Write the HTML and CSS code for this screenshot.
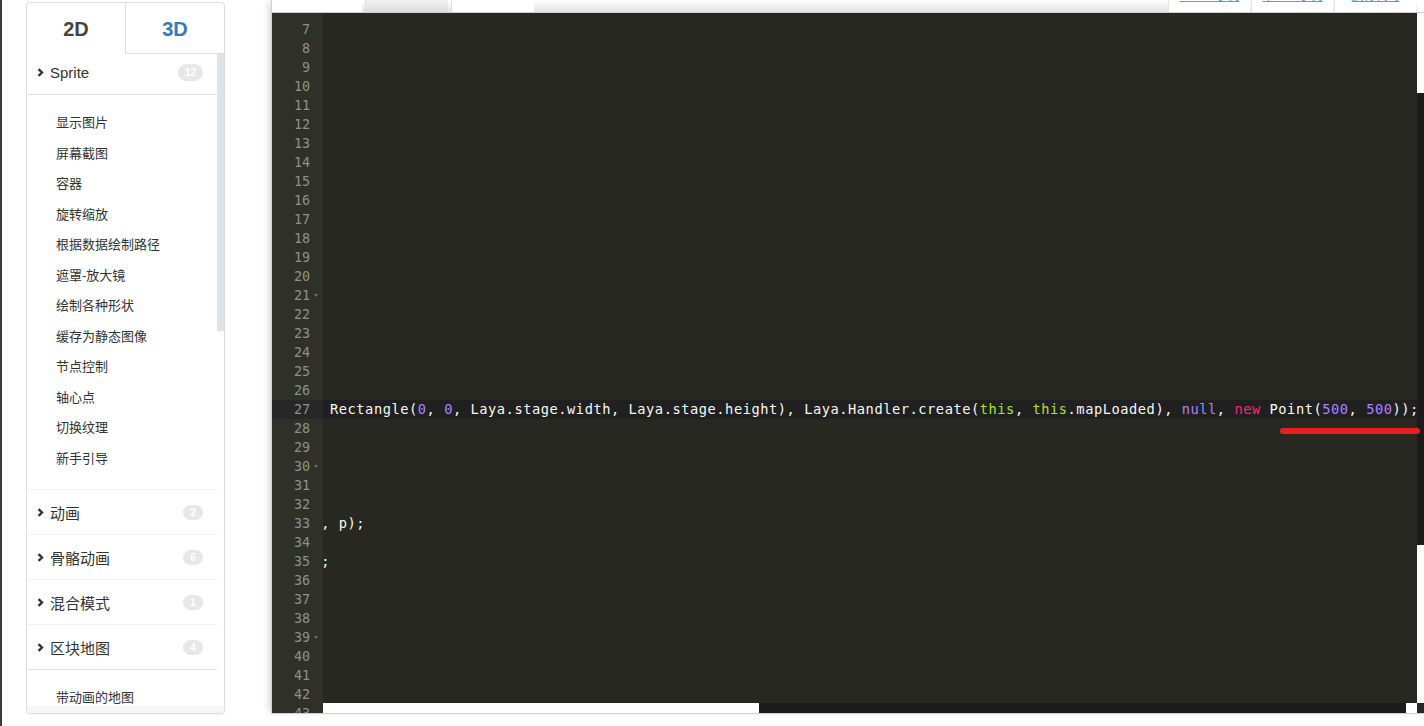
FILE: index.html
```html
<!DOCTYPE html>
<html lang="zh">
<head>
<meta charset="utf-8">
<title>LayaAir 示例</title>
<link rel="stylesheet" href="styles.css">
</head>
<body>
<div class="edge"></div>

<aside class="sidebar">
  <div class="tabs">
    <div class="tab active">2D</div>
    <div class="tab">3D</div>
  </div>
  <div class="listwrap">
    <div class="list">
      <div class="group open">
        <div class="ghead"><svg class="chev" viewBox="0 0 7 9" width="7" height="9"><polyline points="1.5,1.2 5,4.5 1.5,7.8" fill="none" stroke="#333" stroke-width="2.4"/></svg><span class="gname">Sprite</span><span class="badge wide">12</span></div>
        <ul class="items">
          <li>显示图片</li>
          <li>屏幕截图</li>
          <li>容器</li>
          <li>旋转缩放</li>
          <li>根据数据绘制路径</li>
          <li>遮罩-放大镜</li>
          <li>绘制各种形状</li>
          <li>缓存为静态图像</li>
          <li>节点控制</li>
          <li>轴心点</li>
          <li>切换纹理</li>
          <li>新手引导</li>
        </ul>
      </div>
      <div class="group">
        <div class="ghead"><svg class="chev" viewBox="0 0 7 9" width="7" height="9"><polyline points="1.5,1.2 5,4.5 1.5,7.8" fill="none" stroke="#333" stroke-width="2.4"/></svg><span class="gname">动画</span><span class="badge">2</span></div>
      </div>
      <div class="group">
        <div class="ghead"><svg class="chev" viewBox="0 0 7 9" width="7" height="9"><polyline points="1.5,1.2 5,4.5 1.5,7.8" fill="none" stroke="#333" stroke-width="2.4"/></svg><span class="gname">骨骼动画</span><span class="badge">6</span></div>
      </div>
      <div class="group">
        <div class="ghead"><svg class="chev" viewBox="0 0 7 9" width="7" height="9"><polyline points="1.5,1.2 5,4.5 1.5,7.8" fill="none" stroke="#333" stroke-width="2.4"/></svg><span class="gname">混合模式</span><span class="badge">1</span></div>
      </div>
      <div class="group open last">
        <div class="ghead"><svg class="chev" viewBox="0 0 7 9" width="7" height="9"><polyline points="1.5,1.2 5,4.5 1.5,7.8" fill="none" stroke="#333" stroke-width="2.4"/></svg><span class="gname">区块地图</span><span class="badge">4</span></div>
        <ul class="items">
          <li>带动画的地图</li>
        </ul>
      </div>
    </div>
    <div class="vscroll"><div class="vthumb"></div></div>
  </div>
  <div class="sidefoot"></div>
</aside>

<main class="editorwrap">
  <div class="filetabs">
    <div class="ftab"></div>
    <div class="ftab"></div>
    <div class="ftab"></div>
    <div class="fspacer"></div>
    <div class="ftab act"><span>上一个示例</span></div>
    <div class="ftab act"><span>下一个示例</span></div>
    <div class="ftab act"><span>执行代码</span></div>
    <div class="fend"></div>
  </div>
  <div class="editor">
    <div class="main">
      <div class="gutter">
        <div class="gl">7</div><div class="gl">8</div><div class="gl">9</div><div class="gl">10</div>
        <div class="gl">11</div><div class="gl">12</div><div class="gl">13</div><div class="gl">14</div>
        <div class="gl">15</div><div class="gl">16</div><div class="gl">17</div><div class="gl">18</div>
        <div class="gl">19</div><div class="gl">20</div><div class="gl fold">21</div><div class="gl">22</div>
        <div class="gl">23</div><div class="gl">24</div><div class="gl">25</div><div class="gl">26</div>
        <div class="gl cur">27</div><div class="gl">28</div><div class="gl">29</div><div class="gl fold">30</div>
        <div class="gl">31</div><div class="gl">32</div><div class="gl">33</div><div class="gl">34</div>
        <div class="gl">35</div><div class="gl">36</div><div class="gl">37</div><div class="gl">38</div>
        <div class="gl fold">39</div><div class="gl">40</div><div class="gl">41</div><div class="gl">42</div>
        <div class="gl">43</div>
      </div>
      <div class="codecol">
        <div class="code">
          <div class="cl"></div><div class="cl"></div><div class="cl"></div><div class="cl"></div>
          <div class="cl"></div><div class="cl"></div><div class="cl"></div><div class="cl"></div>
          <div class="cl"></div><div class="cl"></div><div class="cl"></div><div class="cl"></div>
          <div class="cl"></div><div class="cl"></div><div class="cl"></div><div class="cl"></div>
          <div class="cl"></div><div class="cl"></div><div class="cl"></div><div class="cl"></div>
          <div class="cl cur"><span class="t"> Rectangle(<span class="n">0</span>, <span class="n">0</span>, Laya.stage.width, Laya.stage.height), Laya.Handler.create(<span class="v">this</span>, <span class="v">this</span>.mapLoaded), <span class="n">null</span>, <span class="k">new</span> Point(<span class="n">500</span>, <span class="n">500</span>));</span></div>
          <div class="cl"></div><div class="cl"></div><div class="cl"></div><div class="cl"></div><div class="cl"></div>
          <div class="cl"><span class="t">, p);</span></div>
          <div class="cl"></div>
          <div class="cl"><span class="t">;</span></div>
          <div class="cl"></div><div class="cl"></div><div class="cl"></div><div class="cl"></div>
          <div class="cl"></div><div class="cl"></div><div class="cl"></div><div class="cl"></div>
        </div>
        <div class="hscroll"><div class="hs-a"></div><div class="hs-b"></div><div class="hs-c"></div></div>
      </div>
    </div>
    <div class="rstrip"><div class="rs1"></div><div class="rs2"></div><div class="rs3"></div><div class="rs4"></div></div>
    <div class="redmark"></div>
  </div>
</main>
</body>
</html>
```

FILE: styles.css
```css
* { box-sizing: border-box; }
html, body { margin: 0; padding: 0; }
body {
  width: 1424px;
  height: 726px;
  overflow: hidden;
  background: #fff;
  display: flex;
  align-items: flex-start;
  font-family: "Liberation Sans", Arial, "Noto Sans CJK SC", sans-serif;
  color: #333;
}

.edge {
  width: 2px;
  height: 726px;
  background: #3c3c3c;
  flex: none;
}

/* ---------- sidebar ---------- */
.sidebar {
  flex: none;
  margin-left: 24px;
  margin-top: 2px;
  width: 199px;
  height: 712px;
  border: 1px solid #ddd;
  border-radius: 4px;
  background: #fff;
  box-shadow: 0 1px 2px rgba(0,0,0,0.05);
  display: flex;
  flex-direction: column;
  overflow: hidden;
}
.tabs {
  display: flex;
  height: 51px;
  flex: none;
}
.tab {
  width: 99px;
  display: flex;
  align-items: center;
  justify-content: center;
  font-size: 20px;
  font-weight: bold;
  color: #337ab7;
  border-bottom: 1px solid #ddd;
  border-left: 1px solid #ddd;
  padding-top: 2px;
}
.tab.active {
  color: #444;
  border-bottom-color: transparent;
  border-left: none;
  width: 98px;
}
.listwrap {
  flex: 1;
  display: flex;
  min-height: 0;
}
.list {
  flex: 1;
  overflow: hidden;
}
.vscroll {
  width: 7px;
  flex: none;
  background: #fff;
}
.vthumb {
  height: 277px;
  background: #dde3e6;
}
.sidefoot {
  height: 7px;
  background: #f6f6f6;
  flex: none;
}

.ghead {
  height: 45px;
  display: flex;
  align-items: center;
  padding-left: 10px;
  padding-right: 14px;
  border-bottom: 1px solid #f2f2f2;
  font-size: 15px;
}
.group:first-child .ghead { height: 41px; padding-bottom: 4px; }
.group.open .ghead { border-bottom-color: #ddd; }
.chev { flex: none; margin-right: 6px; margin-top: 1px; }
.gname { flex: 1; color: #333; }
.badge {
  min-width: 20px;
  height: 15px;
  padding: 0 4px;
  border-radius: 8px;
  background: #e7e7e7;
  color: #fff;
  font-size: 10px;
  font-weight: bold;
  line-height: 15px;
  text-align: center;
}
.badge.wide { min-width: 25px; height: 17px; line-height: 17px; border-radius: 9px; }

.items {
  list-style: none;
  margin: 0;
  padding: 13px 0 15px 29px;
  border-bottom: 1px solid #f2f2f2;
}
.items li {
  font-size: 13px;
  line-height: 30.5px;
  height: 30.5px;
  color: #333;
}

/* ---------- editor ---------- */
.editorwrap {
  flex: none;
  margin-left: 46px;
  width: 1154px;
  height: 714px;
  display: flex;
  flex-direction: column;
  box-shadow: -5px 0 7px -3px rgba(0,0,0,0.18);
  border-bottom: 1px solid #cfcfcf;
}
.filetabs {
  height: 13px;
  flex: none;
  display: flex;
  border-bottom: 1px solid #cfcfcf;
  background: linear-gradient(#ffffff, #e3e3e3);
}
.ftab {
  width: 91px;
  background: #fff;
  border-left: 1px solid #e0e0e0;
  margin-right: 3px;
  overflow: hidden;
}
.ftab:first-child { border-left: 1px solid #d0d0d0; }
.ftab:nth-child(2) { width: 83px; background: linear-gradient(#f2f2f2, #dcdcdc); }
.ftab:nth-child(3) { width: 83px; }
.fspacer { flex: 1; }
.ftab.act {
  width: 82px;
  margin-right: 1px;
  border-left: 1px solid #e4e4e4;
  color: #4aa0f0;
  text-align: center;
  font-size: 12px;
  line-height: 14px;
}
.ftab.act span {
  display: block;
  margin-top: -11px;
  text-decoration: underline;
}
.ftab.act:last-of-type { width: 80px; }
.fend { width: 8px; background: #fff; }

.editor {
  position: relative;
  flex: 1;
  display: flex;
  border-left: 1px solid #d0d0d0;
  min-height: 0;
}
.main {
  flex: 1;
  display: flex;
  background: #272822;
  min-width: 0;
}
.gutter {
  width: 51px;
  flex: none;
  background: #2f3129;
  padding-top: 6.5px;
  overflow: hidden;
  font-family: "DejaVu Sans Mono", "Liberation Mono", monospace;
  font-size: 13.4px;
  color: #8f908a;
}
.gl {
  height: 19px;
  line-height: 19px;
  text-align: right;
  padding-right: 13px;
  position: relative;
}
.gl.cur { background: #272727; }
.gl.fold::after {
  content: "";
  position: absolute;
  right: 5px;
  top: 8px;
  border-left: 2.5px solid transparent;
  border-right: 2.5px solid transparent;
  border-top: 3px solid #6f706a;
}
.codecol {
  flex: 1;
  display: flex;
  flex-direction: column;
  min-width: 0;
}
.code {
  flex: 1;
  overflow: hidden;
  padding-top: 6.5px;
  font-family: "DejaVu Sans Mono", "Liberation Mono", monospace;
  font-size: 13.7px;
  letter-spacing: 0.54px;
  color: #f8f8f2;
}
.cl {
  height: 19px;
  line-height: 19px;
  white-space: pre;
}
.cl.cur { background: #202020; }
.t { display: inline-block; margin-left: -1.8px; }
.n { color: #ae81ff; }
.v { color: #a6e22e; }
.k { color: #f92672; }

.hscroll {
  height: 10px;
  flex: none;
  display: flex;
}
.hs-a { width: 436px; background: #fff; }
.hs-b { flex: 1; background: #1b1b1b; }
.hs-c { width: 11px; background: #fff; }

.rstrip {
  width: 8px;
  flex: none;
  display: flex;
  flex-direction: column;
}
.rs1 { height: 80px; background: #fff; }
.rs2 { height: 452px; background: #1b1b1b; }
.rs3 { flex: 1; background: #fff; }
.rs4 { height: 10px; background: #272822; }

.redmark {
  position: absolute;
  left: 1008px;
  top: 415px;
  width: 140px;
  height: 6px;
  border-radius: 3px;
  background: #ed1c24;
}
```
